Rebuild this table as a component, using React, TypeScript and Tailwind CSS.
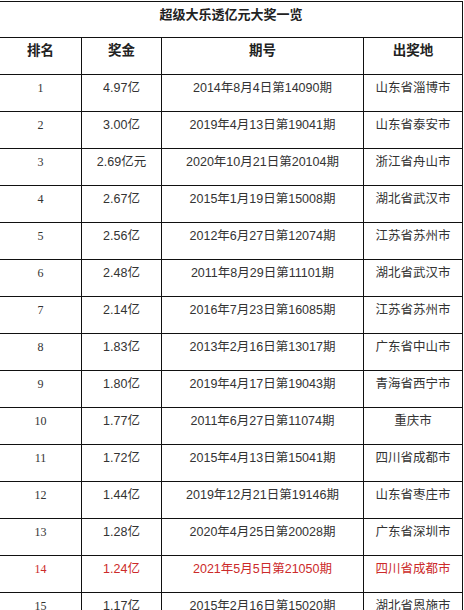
const rows = [
  ["1", "4.97亿", "2014年8月4日第14090期", "山东省淄博市"],
  ["2", "3.00亿", "2019年4月13日第19041期", "山东省泰安市"],
  ["3", "2.69亿元", "2020年10月21日第20104期", "浙江省舟山市"],
  ["4", "2.67亿", "2015年1月19日第15008期", "湖北省武汉市"],
  ["5", "2.56亿", "2012年6月27日第12074期", "江苏省苏州市"],
  ["6", "2.48亿", "2011年8月29日第11101期", "湖北省武汉市"],
  ["7", "2.14亿", "2016年7月23日第16085期", "江苏省苏州市"],
  ["8", "1.83亿", "2013年2月16日第13017期", "广东省中山市"],
  ["9", "1.80亿", "2019年4月17日第19043期", "青海省西宁市"],
  ["10", "1.77亿", "2011年6月27日第11074期", "重庆市"],
  ["11", "1.72亿", "2015年4月13日第15041期", "四川省成都市"],
  ["12", "1.44亿", "2019年12月21日第19146期", "山东省枣庄市"],
  ["13", "1.28亿", "2020年4月25日第20028期", "广东省深圳市"],
  ["14", "1.24亿", "2021年5月5日第21050期", "四川省成都市"],
  ["15", "1.17亿", "2015年2月16日第15020期", "湖北省恩施市"],
];

const sans = "font-['Liberation_Sans','Noto_Sans_CJK_SC',sans-serif]";

function Cell({ w, children, className = "" }: { w: string; children: React.ReactNode; className?: string }) {
  return (
    <div className={`${w} h-full shrink-0 border-r border-[#111] flex items-center justify-center pb-[10px] ${className}`}>
      {children}
    </div>
  );
}

export default function App() {
  return (
    <div className="w-[464px] h-[610px] overflow-hidden bg-white">
      <div className="mt-px w-[463px] border-t border-r border-[#111]">
        {/* title */}
        <div className={`h-[36px] border-b border-[#111] flex items-center justify-center pb-[10px] text-[13px] font-bold text-[#222] ${sans}`}>
          超级大乐透亿元大奖一览
        </div>
        {/* header */}
        <div className={`h-[37px] flex border-b border-[#111] text-[13.5px] font-bold text-[#222] ${sans}`}>
          <Cell w="w-[82px]">排名</Cell>
          <Cell w="w-[80px]">奖金</Cell>
          <Cell w="w-[202px]">期号</Cell>
          <Cell w="w-[98px]" className="border-r-0">出奖地</Cell>
        </div>
        {rows.map((r) => {
          const red = r[0] === "14";
          const color = red ? "text-[#cc2a2a]" : "text-[#333]";
          return (
            <div key={r[0]} className={`h-[37px] flex border-b border-[#111] ${color}`}>
              <Cell w="w-[82px]" className="font-['Liberation_Serif',serif] text-[12px]">{r[0]}</Cell>
              <Cell w="w-[80px]" className={`${sans} text-[12.5px]`}>{r[1]}</Cell>
              <Cell w="w-[202px]" className={`${sans} text-[12.5px]`}>{r[2]}</Cell>
              <Cell w="w-[98px]" className={`${sans} text-[12.5px] border-r-0`}>{r[3]}</Cell>
            </div>
          );
        })}
      </div>
    </div>
  );
}
